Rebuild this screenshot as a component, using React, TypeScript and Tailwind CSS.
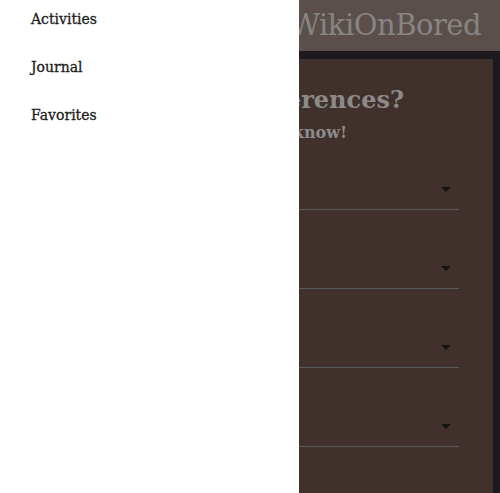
import React from "react";

const serif = { fontFamily: '"DejaVu Serif", "Liberation Serif", serif' };

function SelectRow() {
  return (
    <div className="h-[41px] border-b border-[#585a5c] flex items-center justify-end pr-[8px]">
      <svg width="10" height="5" viewBox="0 0 10 5" className="block">
        <path d="M0 0 L10 0 L5 5 Z" fill="#151313" />
      </svg>
    </div>
  );
}

export default function App() {
  return (
    <div className="relative w-[500px] h-[493px] overflow-hidden bg-[#1c1a1f]" style={serif}>
      <header className="h-[51px] bg-[#5b4f4c] flex items-center justify-end pr-[19px]">
        <span className="text-[29px] leading-none text-[#878584] tracking-[-0.5px]">WikiOnBored</span>
      </header>
      <main className="pt-[8px] pl-[8px] pr-[7px] h-[442px]">
        <section className="bg-[#40312c] h-full pt-[25px]">
          <h2 className="text-[24px] leading-[32px] font-bold text-[#8d8a89] text-right pr-[89px] whitespace-nowrap">
            Any preferences?
          </h2>
          <p className="text-[16px] leading-[24px] font-bold text-[#8d8a89] text-right pr-[146px] mt-[5px] whitespace-nowrap">
            Let us know!
          </p>
          <div className="mt-[24px] ml-[34px] mr-[34px] flex flex-col gap-[38px]">
            <SelectRow />
            <SelectRow />
            <SelectRow />
            <SelectRow />
          </div>
        </section>
      </main>
      <nav className="absolute left-0 top-0 w-[299px] h-full bg-white flex flex-col gap-[10px]">
        {["Activities", "Journal", "Favorites"].map((t) => (
          <div key={t} className="h-[38px] flex items-center pl-[31px] text-[14px] text-[#1c1c1c] [-webkit-text-stroke:0.3px_#1c1c1c]">
            {t}
          </div>
        ))}
      </nav>
    </div>
  );
}
